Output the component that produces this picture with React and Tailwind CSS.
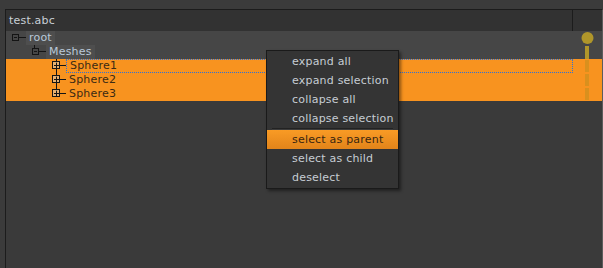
import React from "react";

const line = "#141414";

function RootIcon() {
    return (
        <svg width={20} height={14} className="shrink-0">
            <rect x={6.5} y={3.5} width={6} height={6} fill="none" stroke={line}/>
            <path d="M8 6.5h3M13 6.5h7" stroke={line}/>
        </svg>
    );
}

function MeshIcon() {
    return (
        <svg width={40} height={14} className="shrink-0">
            <path d="M28.5 0v3" stroke={line}/>
            <rect x={26.5} y={3.5} width={6} height={6} fill="none" stroke={line}/>
            <path d="M28 6.5h3M33 6.5h7" stroke={line}/>
        </svg>
    );
}

function SphereIcon({last}) {
    return (
        <svg width={60} height={14} className="shrink-0">
            <path d={last ? "M50.5 0v7" : "M50.5 0v14"} stroke={line}/>
            <rect x={46.5} y={2.5} width={7} height={7} fill="#d8c8b0" fillOpacity={0.55} stroke={line}/>
            <path d="M48 6.5h5M50.5 4v5M54 6.5h6" stroke={line}/>
        </svg>
    );
}

function Vis({kind}) {
    return (
        <div className="w-[29px] shrink-0">
            <svg width={29} height={14}>
                {kind === "circle" && <circle cx={14.5} cy={7} r={6} fill="#b0962a"/>}
                {kind === "bar" && <rect x={12} y={1} width={4} height={13} fill="#b0962a"/>}
                {kind === "dash" && <rect x={12} y={1} width={4} height={12} fill="#d9901e"/>}
            </svg>
        </div>
    );
}

const menu = [
    {label: "expand all"},
    {label: "expand selection"},
    {label: "collapse all"},
    {label: "collapse selection"},
    {sep: true},
    {label: "select as parent", active: true},
    {label: "select as child"},
    {label: "deselect"},
];

export default function App() {
    return (
        <div className="relative w-[603px] h-[268px] overflow-hidden bg-[#3b3b3b] pt-[9px] pl-[5px] font-['DejaVu_Sans',sans-serif] text-[11px] leading-[14px]">
            <div className="h-full flex flex-col border-l border-t border-r border-[#1c1c1c] border-r-[#5c5c5c] bg-[#3a3a3a]">
                {/* header */}
                <div className="h-[21px] flex bg-[#323232] shrink-0">
                    <div className="flex-1 flex items-center pl-[3px] text-[#c9d0d6] tracking-[0.2px]">test.abc</div>
                    <div className="w-[30px] border-l border-[#1c1c1c]"></div>
                </div>

                {/* tree */}
                <div className="flex h-[14px] bg-[#464646]">
                    <div className="flex-1 flex items-center">
                        <RootIcon/>
                        <span className="bg-[#4e4e4e] h-[14px] px-[3px] text-[#b9c9d9] tracking-[0.2px]">root</span>
                    </div>
                    <Vis kind="circle"/>
                </div>
                <div className="flex h-[14px] bg-[#464646]">
                    <div className="flex-1 flex items-center">
                        <MeshIcon/>
                        <span className="bg-[#4e4e4e] h-[14px] px-[3px] text-[#b9c9d9] tracking-[0.2px]">Meshes</span>
                    </div>
                    <Vis kind="bar"/>
                </div>
                {["Sphere1", "Sphere2", "Sphere3"].map((name, i) => (
                    <div key={name} className="flex h-[14px] bg-[#f8931f]">
                        <div className="flex-1 flex items-center">
                            <SphereIcon last={i === 2}/>
                            <span className={`h-[14px] flex-1 px-[3px] text-[#3b2a14] tracking-[0.2px] ${i === 0 ? 'border border-dotted border-[#2f73d6] leading-[12px]' : ''}`}>
                                {name}
                            </span>
                        </div>
                        <Vis kind="dash"/>
                    </div>
                ))}
            </div>

            {/* context menu */}
            <div className="absolute left-[266px] top-[50px] w-[133px] py-px bg-[#343434] border border-[#1a1a1a] shadow-[2px_2px_3px_rgba(0,0,0,0.45)]">
                {menu.map((m, i) =>
                    m.sep ? (
                        <div key={i} className="mx-[5px] h-[2px] border-t border-[#222] border-b border-b-[#3c3c3c]"></div>
                    ) : (
                        <div key={i}
                             className={`h-[19px] flex items-center pl-[25px] tracking-[0.2px] ${m.active ? 'bg-gradient-to-b from-[#f99b25] to-[#e2841a] text-[#3a2610]' : 'text-[#c6cdd3]'}`}>
                            {m.label}
                        </div>
                    )
                )}
            </div>
        </div>
    );
}
